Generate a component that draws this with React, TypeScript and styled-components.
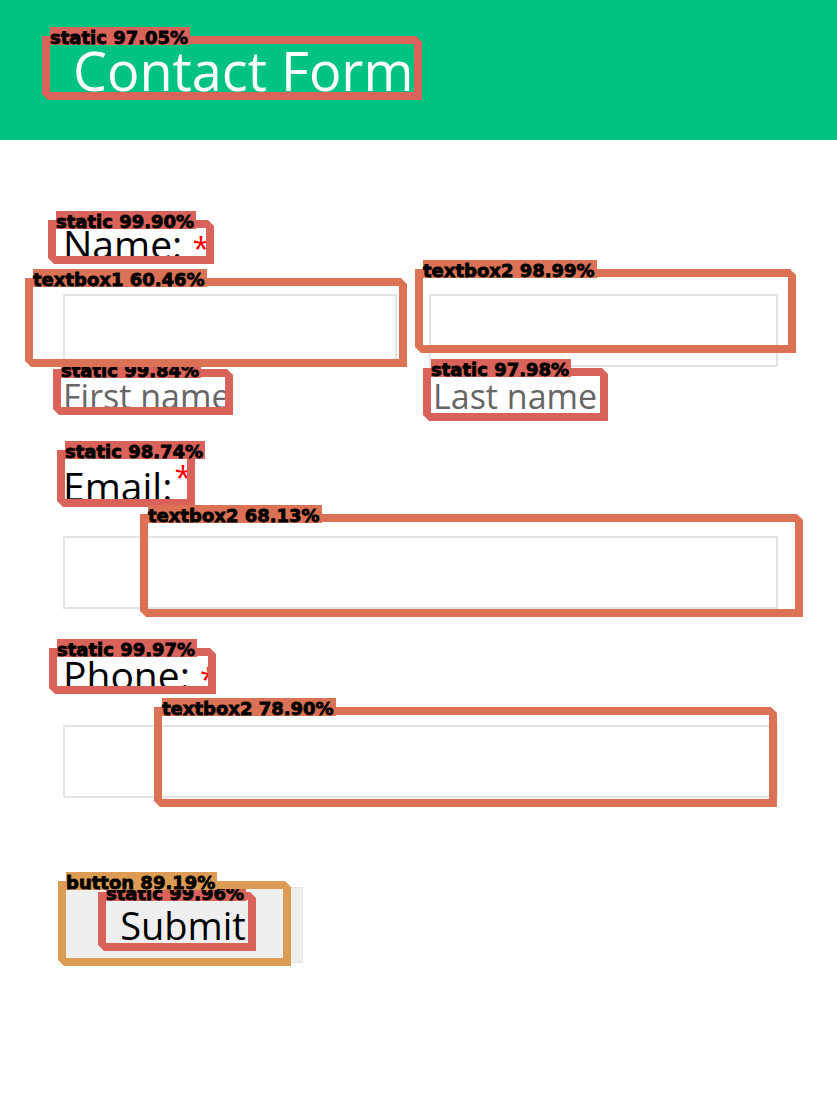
import React from "react";
import styled, { createGlobalStyle, css } from "styled-components";

const GlobalStyle = createGlobalStyle`
  html, body {
    margin: 0;
    padding: 0;
    background: #ffffff;
  }
  body {
    font-family: "Open Sans", "Liberation Sans", sans-serif;
  }
  * { box-sizing: border-box; }
`;

const Page = styled.div`
  position: relative;
  width: 837px;
  min-height: 1111px;
  overflow: hidden;
  background: #ffffff;
`;

const Header = styled.header`
  height: 140px;
  background: #00c281;
  display: flex;
  align-items: center;
  padding-left: 73px;
`;

const Title = styled.h1`
  margin: 0;
  font-family: "Open Sans", sans-serif;
  font-weight: 500;
  font-size: 54px;
  line-height: 1;
  color: #ffffff;
`;

const Form = styled.form`
  display: flex;
  flex-direction: column;
  padding: 82px 59px 0 63px;
`;

const Field = styled.div<{ $top: number }>`
  display: flex;
  flex-direction: column;
  margin-top: ${(p) => p.$top}px;
`;

const Label = styled.label`
  display: block;
  height: 43px;
  font-family: "Open Sans", sans-serif;
  font-size: 39px;
  line-height: 43px;
  color: #000000;
  margin-bottom: 29px;
  white-space: nowrap;
`;

const Required = styled.span<{ $raised?: boolean }>`
  position: relative;
  color: #ff0000;
  font-size: 31px;
  ${(p) =>
    p.$raised &&
    css`
      top: -13px;
      margin-left: 2px;
    `}
`;

const NameRow = styled.div`
  display: grid;
  grid-template-columns: 334px 1fr;
  column-gap: 32px;
`;

const Column = styled.div`
  display: flex;
  flex-direction: column;
`;

const TextInput = styled.input`
  display: block;
  width: 100%;
  height: 73px;
  margin: 0;
  padding: 0 12px;
  border: 2px solid #e4e4e4;
  background: #ffffff;
  font-family: "Open Sans", sans-serif;
  font-size: 30px;
  outline: none;
`;

const SubLabel = styled.span<{ $indent?: number }>`
  display: block;
  height: 40px;
  margin-top: 9px;
  padding-left: ${(p) => p.$indent ?? 0}px;
  font-family: "Open Sans", sans-serif;
  font-size: 34px;
  line-height: 40px;
  color: #666666;
  white-space: nowrap;
`;

const SubmitButton = styled.button`
  align-self: flex-start;
  margin-top: 89px;
  width: 240px;
  height: 76px;
  padding: 0;
  background: #efefef;
  border: 1px solid #e3e3e3;
  font-family: "Open Sans", sans-serif;
  font-size: 38px;
  line-height: 1;
  color: #000000;
  cursor: pointer;
`;

/* ---------- detection overlay ---------- */

type Kind = "static" | "textbox" | "button";

const kindColor: Record<Kind, string> = {
  static: "#d9635a",
  textbox: "#db7256",
  button: "#dc9c53",
};

const Overlay = styled.div`
  position: absolute;
  inset: 0;
  pointer-events: none;
`;

const Detection = styled.div<{ $x: number; $y: number; $w: number; $h: number }>`
  position: absolute;
  left: ${(p) => p.$x}px;
  top: ${(p) => p.$y}px;
  width: ${(p) => p.$w}px;
  height: ${(p) => p.$h}px;
`;

const Frame = styled.div<{ $kind: Kind }>`
  position: absolute;
  inset: 0;
  border: 8px solid ${(p) => kindColor[p.$kind]};
  clip-path: polygon(
    0 0,
    calc(100% - 6px) 0,
    100% 6px,
    100% 100%,
    6px 100%,
    0 calc(100% - 6px)
  );
`;

const Tag = styled.span<{ $kind: Kind }>`
  position: absolute;
  left: 8px;
  top: -9px;
  height: 18px;
  padding-right: 2px;
  background: ${(p) => kindColor[p.$kind]};
  color: #000000;
  font-family: "DejaVu Sans", "Liberation Sans", sans-serif;
  font-weight: 700;
  font-size: 18px;
  line-height: 22px;
  -webkit-text-stroke: 0.8px #000000;
  white-space: nowrap;
`;

type Det = { label: string; kind: Kind; x: number; y: number; w: number; h: number };

const detections: Det[] = [
  { label: "static 97.05%", kind: "static", x: 42, y: 36, w: 380, h: 64 },
  { label: "static 99.90%", kind: "static", x: 48, y: 220, w: 166, h: 44 },
  { label: "static 99.84%", kind: "static", x: 53, y: 369, w: 180, h: 46 },
  { label: "textbox1 60.46%", kind: "textbox", x: 25, y: 278, w: 382, h: 89 },
  { label: "textbox2 98.99%", kind: "textbox", x: 415, y: 269, w: 381, h: 84 },
  { label: "static 97.98%", kind: "static", x: 423, y: 368, w: 185, h: 53 },
  { label: "static 98.74%", kind: "static", x: 57, y: 450, w: 138, h: 57 },
  { label: "textbox2 68.13%", kind: "textbox", x: 140, y: 514, w: 663, h: 103 },
  { label: "static 99.97%", kind: "static", x: 49, y: 648, w: 167, h: 46 },
  { label: "textbox2 78.90%", kind: "textbox", x: 154, y: 707, w: 623, h: 100 },
  { label: "static 99.96%", kind: "static", x: 98, y: 892, w: 158, h: 59 },
  { label: "button 89.19%", kind: "button", x: 58, y: 881, w: 233, h: 85 },
];

export default function App() {
  return (
    <Page>
      <GlobalStyle />
      <Header>
        <Title>Contact Form</Title>
      </Header>
      <Form onSubmit={(e) => e.preventDefault()}>
        <Field $top={0}>
          <Label>
            Name: <Required>*</Required>
          </Label>
          <NameRow>
            <Column>
              <TextInput type="text" aria-label="First name" />
              <SubLabel>First name</SubLabel>
            </Column>
            <Column>
              <TextInput type="text" aria-label="Last name" />
              <SubLabel $indent={4}>Last name</SubLabel>
            </Column>
          </NameRow>
        </Field>
        <Field $top={48}>
          <Label>
            Email:<Required $raised>*</Required>
          </Label>
          <TextInput type="email" aria-label="Email" />
        </Field>
        <Field $top={44}>
          <Label>
            Phone: <Required>*</Required>
          </Label>
          <TextInput type="tel" aria-label="Phone" />
        </Field>
        <SubmitButton type="submit">Submit</SubmitButton>
      </Form>
      <Overlay>
        {detections.map((d) => (
          <Detection key={d.label + d.x} $x={d.x} $y={d.y} $w={d.w} $h={d.h}>
            <Frame $kind={d.kind} />
            <Tag $kind={d.kind}>{d.label}</Tag>
          </Detection>
        ))}
      </Overlay>
    </Page>
  );
}
